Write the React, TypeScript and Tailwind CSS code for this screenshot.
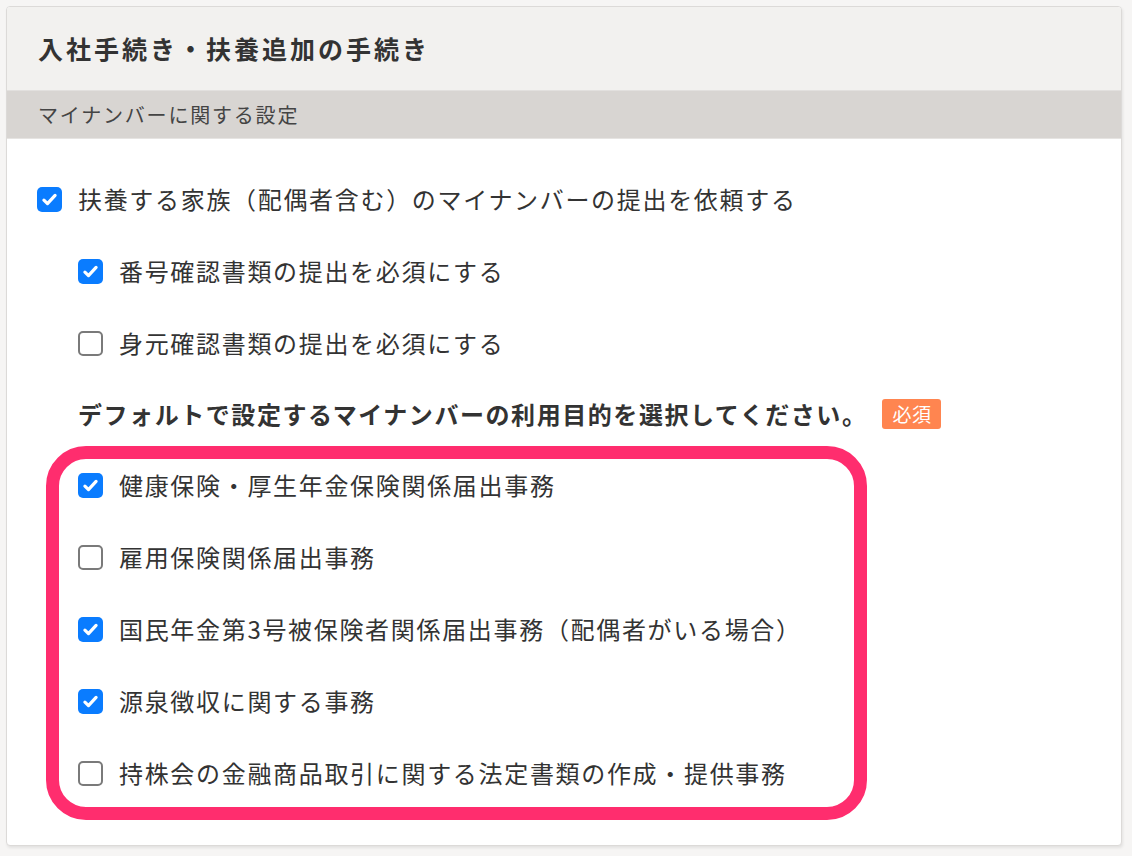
import React from "react";

type Item = { label: string; checked: boolean };

const purposes: Item[] = [
  { label: "健康保険・厚生年金保険関係届出事務", checked: true },
  { label: "雇用保険関係届出事務", checked: false },
  { label: "国民年金第3号被保険者関係届出事務（配偶者がいる場合）", checked: true },
  { label: "源泉徴収に関する事務", checked: true },
  { label: "持株会の金融商品取引に関する法定書類の作成・提供事務", checked: false },
];

function Checkbox({ checked }: { checked: boolean }) {
  if (checked) {
    return (
      <span className="flex h-[25px] w-[25px] shrink-0 items-center justify-center rounded-[5px] bg-[#0a7cff]">
        <svg width="19" height="19" viewBox="0 0 16 16" fill="none">
          <path
            d="M3.3 8.6 L6.3 11.5 L12.7 4.6"
            stroke="#ffffff"
            strokeWidth="2.7"
            strokeLinecap="round"
            strokeLinejoin="round"
          />
        </svg>
      </span>
    );
  }
  return (
    <span className="block h-[25px] w-[25px] shrink-0 rounded-[5px] border-2 border-[#7a7a7a] bg-white"></span>
  );
}

function Row({ label, checked }: Item) {
  return (
    <label className="flex h-[72px] items-center gap-4">
      <Checkbox checked={checked} />
      <span className="text-[24px] tracking-[0.07em] text-[#333]">{label}</span>
    </label>
  );
}

export default function App() {
  return (
    <div
      className="min-h-[856px] bg-[#f6f5f4] pt-[6px] pl-[6px]"
      style={{ fontFamily: '"Noto Sans CJK JP", "Noto Sans", sans-serif' }}
    >
      <div className="w-[1116px] overflow-hidden rounded-[4px] border border-[#dcdad8] bg-white shadow-[1px_2px_3px_rgba(0,0,0,0.08)]">
        {/* Header */}
        <div className="flex h-[84px] items-center border-b border-[#e2e0de] bg-[#f2f1ef] pl-[31px]">
          <h1 className="text-[25px] font-bold tracking-[0.12em] text-[#333]">
            入社手続き・扶養追加の手続き
          </h1>
        </div>
        <div className="flex h-[48px] items-center border-b border-[#e6e4e2] bg-[#d8d5d2] pl-[31px]">
          <span className="text-[20px] tracking-[0.09em] text-[#444]">マイナンバーに関する設定</span>
        </div>

        {/* Body */}
        <div className="pt-[24px] pb-[36px] pl-[30px]">
          <Row label="扶養する家族（配偶者含む）のマイナンバーの提出を依頼する" checked={true} />
          <div className="ml-[41px]">
            <Row label="番号確認書類の提出を必須にする" checked={true} />
            <Row label="身元確認書類の提出を必須にする" checked={false} />
            <div className="flex h-[70px] items-center gap-[15px]">
              <span className="text-[24px] font-bold tracking-[0.065em] text-[#333]">
                デフォルトで設定するマイナンバーの利用目的を選択してください。
              </span>
              <span className="flex h-[30px] w-[59px] items-center justify-center rounded-[3px] bg-[#ff8550] text-[19px] tracking-[0.03em] text-white">
                必須
              </span>
            </div>
            <div className="relative">
              {purposes.map((p) => (
                <Row key={p.label} label={p.label} checked={p.checked} />
              ))}
              {/* highlight annotation */}
              <div className="pointer-events-none absolute -top-[3px] -bottom-[11px] -left-[32px] w-[821px] rounded-[40px] border-[13px] border-[#ff2d6e]"></div>
            </div>
          </div>
        </div>
      </div>
    </div>
  );
}
